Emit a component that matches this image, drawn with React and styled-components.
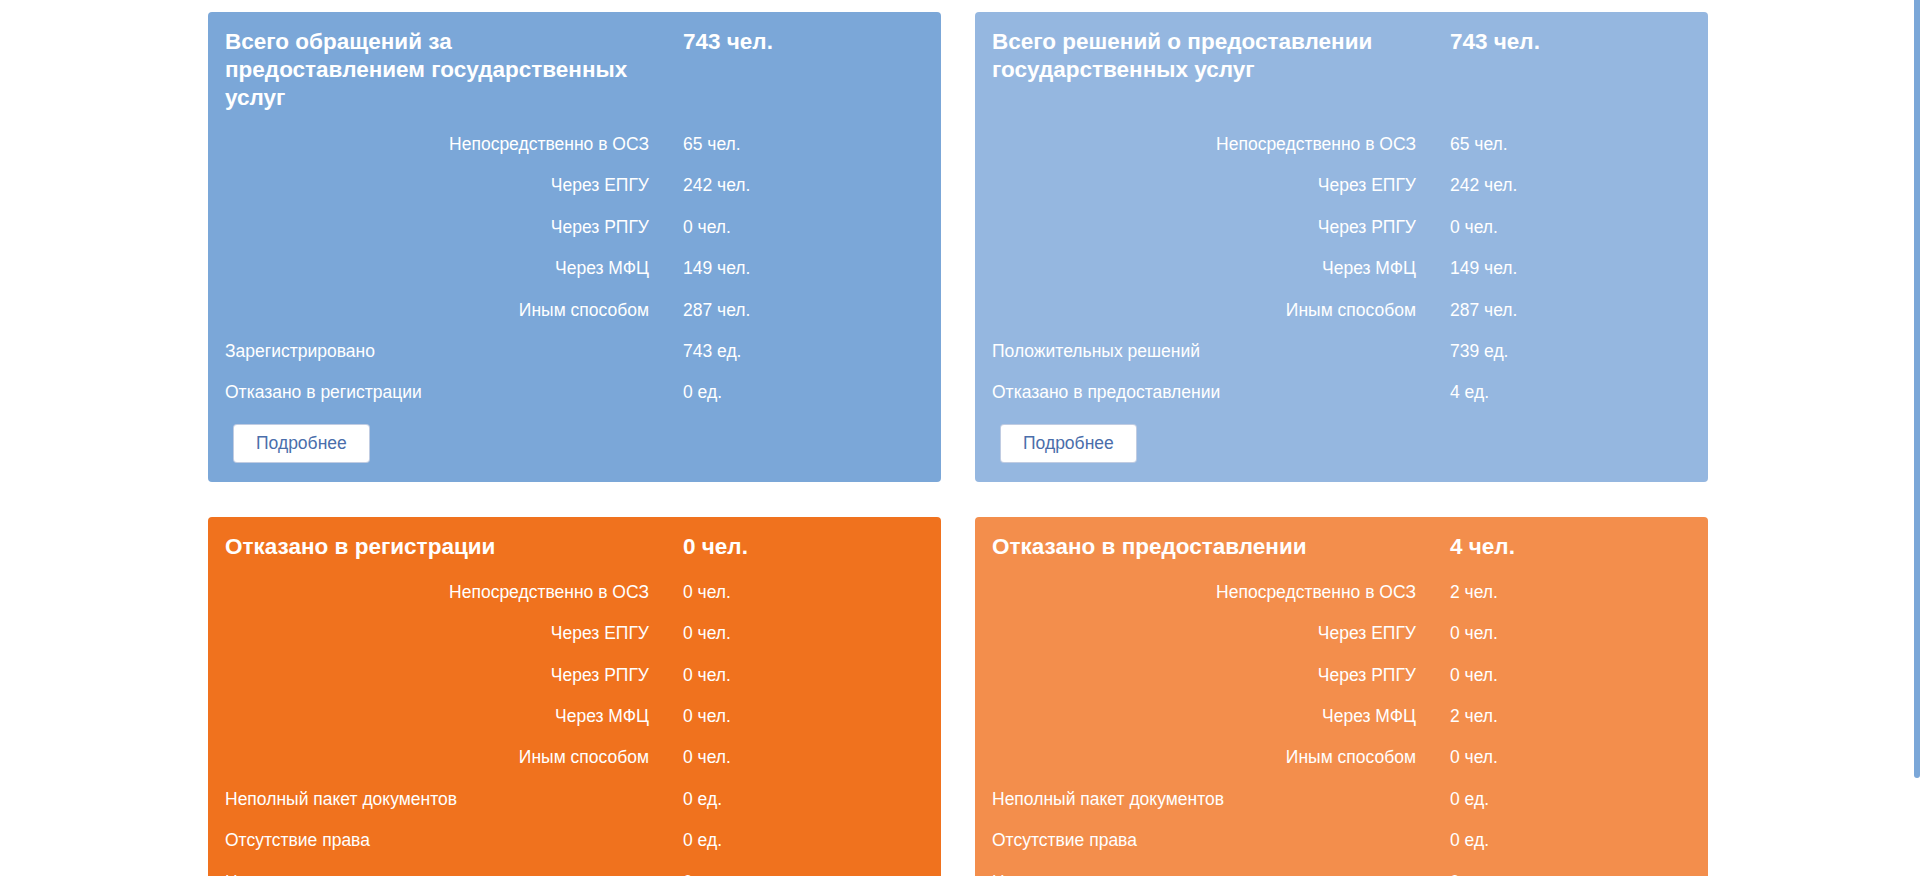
import React from "react";
import styled, { createGlobalStyle } from "styled-components";

const GlobalStyle = createGlobalStyle`
  html, body {
    margin: 0;
    padding: 0;
    background: #ffffff;
    font-family: "Liberation Sans", Arial, sans-serif;
  }
`;

const ScrollThumb = styled.div`
  position: fixed;
  top: 0;
  right: 0;
  width: 6px;
  height: 778px;
  background: #7ba7d8;
  border-radius: 0 0 3px 3px;
  z-index: 10;
`;

const Page = styled.div`
  width: 1500px;
  margin: 12px 0 16px 208px;
  display: grid;
  grid-template-columns: 733px 733px;
  column-gap: 34px;
  row-gap: 35px;
`;

const Card = styled.section`
  background: ${(p) => p.$bg};
  border-radius: 4px;
  padding: 16px 17px 19px 17px;
  color: #ffffff;
  display: flex;
  flex-direction: column;
  align-items: flex-start;
`;

const TitleRow = styled.div`
  display: grid;
  grid-template-columns: 424px 1fr;
  column-gap: 34px;
  width: 100%;
  min-height: ${(p) => p.$minH}px;
  align-content: start;
`;

const Title = styled.h2`
  margin: 0;
  padding-right: 12px;
  font-size: 22.5px;
  line-height: 28px;
  font-weight: bold;
`;

const Total = styled.div`
  font-size: 22.5px;
  line-height: 28px;
  font-weight: bold;
`;

const Rows = styled.div`
  display: flex;
  flex-direction: column;
  width: 100%;
`;

const Row = styled.div`
  display: grid;
  grid-template-columns: 424px 1fr;
  column-gap: 34px;
  font-size: 17.5px;
  line-height: 25.4px;
  padding: 8px 0;
`;

const Label = styled.div`
  text-align: ${(p) => (p.$right ? "right" : "left")};
`;

const Value = styled.div``;

const MoreButton = styled.button`
  margin: 10px 0 0 8px;
  height: 39px;
  padding: 0 22px;
  background: #ffffff;
  border: 1px solid rgba(74, 110, 171, 0.35);
  border-radius: 4px;
  color: #4a6eab;
  font-family: "Liberation Sans", Arial, sans-serif;
  font-size: 17.5px;
  line-height: 25px;
  cursor: pointer;
`;

const channels = ["Непосредственно в ОСЗ", "Через ЕПГУ", "Через РПГУ", "Через МФЦ", "Иным способом"];

const mk = (vals, extra) => [
  ...channels.map((l, i) => ({ label: l, value: vals[i], right: true })),
  ...extra.map(([label, value]) => ({ label, value, right: false })),
];

const cards = [
  {
    bg: "#7ba7d8",
    title: "Всего обращений за предоставлением государственных услуг",
    total: "743 чел.",
    minH: 96,
    rows: mk(["65 чел.", "242 чел.", "0 чел.", "149 чел.", "287 чел."], [
      ["Зарегистрировано", "743 ед."],
      ["Отказано в регистрации", "0 ед."],
    ]),
  },
  {
    bg: "#95b7e0",
    title: "Всего решений о предоставлении государственных услуг",
    total: "743 чел.",
    minH: 96,
    rows: mk(["65 чел.", "242 чел.", "0 чел.", "149 чел.", "287 чел."], [
      ["Положительных решений", "739 ед."],
      ["Отказано в предоставлении", "4 ед."],
    ]),
  },
  {
    bg: "#f0721e",
    title: "Отказано в регистрации",
    total: "0 чел.",
    minH: 39,
    rows: mk(["0 чел.", "0 чел.", "0 чел.", "0 чел.", "0 чел."], [
      ["Неполный пакет документов", "0 ед."],
      ["Отсутствие права", "0 ед."],
      ["Недостоверные сведения", "0 ед."],
    ]),
  },
  {
    bg: "#f38e4c",
    title: "Отказано в предоставлении",
    total: "4 чел.",
    minH: 39,
    rows: mk(["2 чел.", "0 чел.", "0 чел.", "2 чел.", "0 чел."], [
      ["Неполный пакет документов", "0 ед."],
      ["Отсутствие права", "0 ед."],
      ["Недостоверные сведения", "0 ед."],
    ]),
  },
];

export default function App() {
  return (
    <>
      <GlobalStyle />
      <ScrollThumb aria-hidden="true" />
      <Page>
        {cards.map((c, i) => (
          <Card key={i} $bg={c.bg}>
            <TitleRow $minH={c.minH}>
              <Title>{c.title}</Title>
              <Total>{c.total}</Total>
            </TitleRow>
            <Rows>
              {c.rows.map((r, j) => (
                <Row key={j}>
                  <Label $right={r.right}>{r.label}</Label>
                  <Value>{r.value}</Value>
                </Row>
              ))}
            </Rows>
            <MoreButton type="button">Подробнее</MoreButton>
          </Card>
        ))}
      </Page>
    </>
  );
}
